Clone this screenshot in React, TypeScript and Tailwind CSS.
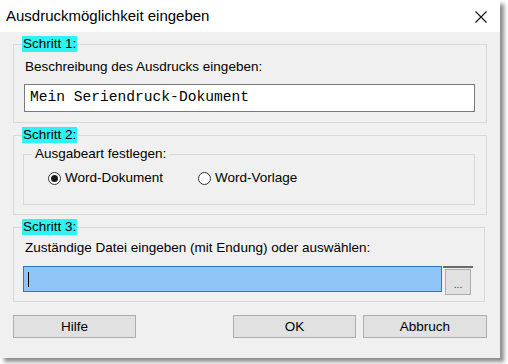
import { useState } from "react";

const font = "font-['Liberation_Sans',Arial,sans-serif]";

const Step = ({ label }: { label: string }) => (
  <legend className="ml-[8px] bg-[#2ef3f3] px-[1px] text-[13.5px] leading-[16px] text-black">
    {label}
  </legend>
);

const Radio = ({ checked, label, onClick }: { checked: boolean; label: string; onClick: () => void }) => (
  <button type="button" onClick={onClick} className="flex items-center gap-[4px] text-[13.5px] leading-[16px] text-black">
    <span className="flex h-[13px] w-[13px] items-center justify-center rounded-full border border-[#333] bg-white">
      {checked && <span className="h-[7px] w-[7px] rounded-full bg-[#1b1b1b]" />}
    </span>
    {label}
  </button>
);

const DialogButton = ({ children, className = "" }: { children: string; className?: string }) => (
  <button
    type="button"
    className={`h-[23px] border border-[#adadad] bg-[#e1e1e1] text-[13.5px] leading-[16px] text-black ${className}`}
  >
    {children}
  </button>
);

export default function App() {
  const [mode, setMode] = useState<"doc" | "tpl">("doc");

  return (
    <div className={`h-[364px] w-[508px] bg-white ${font}`}>
      <div className="flex h-[358px] w-[500px] flex-col shadow-[4px_4px_4px_rgba(0,0,0,0.45)]">
        {/* title bar */}
        <div className="flex h-[32px] items-center justify-between bg-white pl-[6px] pr-[13px]">
          <span className="text-[15px] text-black">Ausdruckmöglichkeit eingeben</span>
          <svg width="12" height="12" viewBox="0 0 12 12" className="mt-[1px]">
            <path d="M0.5 0.5 L11.5 11.5 M11.5 0.5 L0.5 11.5" stroke="#111" strokeWidth="1.1" />
          </svg>
        </div>

        <div className="flex flex-1 flex-col bg-[#f0f0f0] px-[13px]">
          {/* Schritt 1 */}
          <fieldset className="mt-[4px] border border-[#d9d9d9] pb-[10px]">
            <Step label="Schritt 1:" />
            <div className="ml-[11px] mt-[7px] text-[13.5px] leading-[16px] text-black">
              Beschreibung des Ausdrucks eingeben:
            </div>
            <div className="ml-[10px] mr-[11px] mt-[9px] flex h-[28px] items-center border border-[#7a7a7a] bg-white pl-[5px] font-['Liberation_Mono','Courier_New',monospace] text-[14.6px] text-black">
              Mein Seriendruck-Dokument
            </div>
          </fieldset>

          {/* Schritt 2 */}
          <fieldset className="mt-[4px] border border-[#d9d9d9] pb-[9px]">
            <Step label="Schritt 2:" />
            <fieldset className="ml-[9px] mr-[11px] mt-[3px] border border-[#d9d9d9] pb-[18px]">
              <legend className="ml-[8px] px-[3px] text-[13.5px] leading-[16px] text-black">
                Ausgabeart festlegen:
              </legend>
              <div className="ml-[24px] mt-[8px] flex gap-[35px]">
                <Radio checked={mode === "doc"} label="Word-Dokument" onClick={() => setMode("doc")} />
                <Radio checked={mode === "tpl"} label="Word-Vorlage" onClick={() => setMode("tpl")} />
              </div>
            </fieldset>
          </fieldset>

          {/* Schritt 3 */}
          <fieldset className="mr-[2px] mt-[4px] border border-[#d9d9d9] pb-[6px]">
            <Step label="Schritt 3:" />
            <div className="ml-[11px] mt-[5px] text-[13.5px] leading-[16px] text-black">
              Zuständige Datei eingeben (mit Endung) oder auswählen:
            </div>
            <div className="ml-[9px] mt-[10px] flex items-start">
              <div className="flex h-[26px] w-[419px] items-center border border-[#2f74c8] bg-[#8fc6f7] pl-[4px]">
                <span className="h-[15px] w-[1px] bg-black" />
              </div>
              <div className="ml-[1px] border-t-2 border-[#6a6a6a] px-[2px] pt-[1px]">
                <button
                  type="button"
                  className="flex h-[26px] w-[26px] items-end justify-center border border-[#adadad] bg-[#e1e1e1] pb-[4px] text-[10px] leading-[10px] text-[#333]"
                >
                  ...
                </button>
              </div>
            </div>
          </fieldset>

          {/* buttons */}
          <div className="mt-[13px] flex">
            <DialogButton className="w-[123px]">Hilfe</DialogButton>
            <DialogButton className="ml-[97px] w-[123px]">OK</DialogButton>
            <DialogButton className="ml-[7px] w-[124px]">Abbruch</DialogButton>
          </div>
        </div>
      </div>
    </div>
  );
}
